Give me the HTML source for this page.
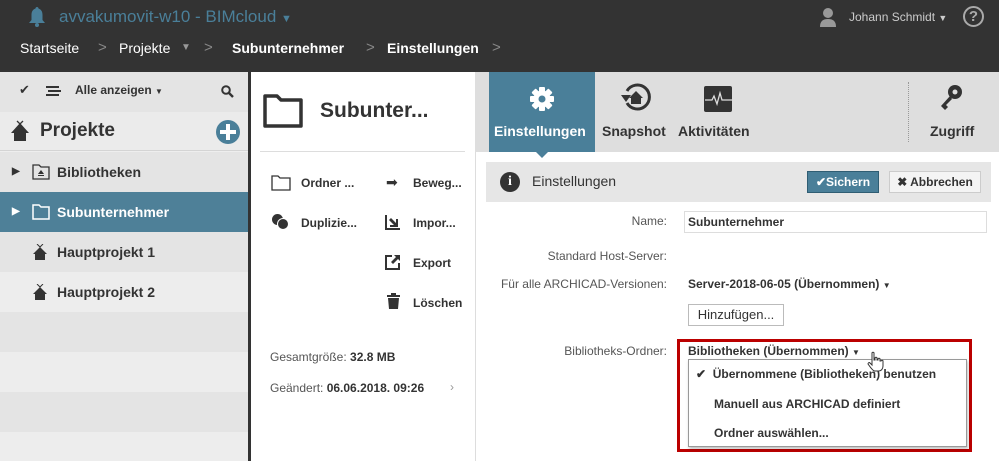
<!DOCTYPE html>
<html><head><meta charset="utf-8"><style>
*{margin:0;padding:0;box-sizing:border-box}
body{width:999px;height:461px;overflow:hidden;font-family:"Liberation Sans",sans-serif;background:#fff;position:relative;color:#333}
.abs{position:absolute}
.b{font-weight:bold}
#hdr{left:0;top:0;width:999px;height:72px;background:#333}
.row{position:absolute;left:0;width:248px;height:40px;font-size:14px;font-weight:bold;line-height:40px}
.lbl{position:absolute;font-size:12px;color:#555;text-align:right;width:180px;left:487px}
.bc{position:absolute;top:40px;font-size:14px;color:#fff;white-space:nowrap}
.ch{position:absolute;top:39px;font-size:15px;color:#888}
</style></head><body>
<div id="hdr" class="abs"></div>
<svg class="abs" style="left:27px;top:6px" width="20" height="22" viewBox="0 0 20 22"><path d="M10 1c-1 0-1.5.8-1.5 1.5C5.5 3.5 4.5 6 4.5 9v5L2 17h16l-2.5-3V9c0-3-1-5.5-4-6.5C11.5 1.8 11 1 10 1z" fill="#4a7f99"/><circle cx="10" cy="19" r="2" fill="#4a7f99"/></svg>
<div class="abs" style="left:59px;top:7px;font-size:17px;color:#4a7f99">avvakumovit-w10 - BIMcloud <span style="font-size:11px">▼</span></div>
<div class="bc" style="left:20px">Startseite</div>
<div class="ch" style="left:98px">&gt;</div>
<div class="bc" style="left:119px">Projekte</div>
<div class="bc" style="left:181px;top:42px;font-size:10px;color:#999">▼</div>
<div class="ch" style="left:204px">&gt;</div>
<div class="bc b" style="left:232px">Subunternehmer</div>
<div class="ch" style="left:366px">&gt;</div>
<div class="bc b" style="left:387px">Einstellungen</div>
<div class="ch" style="left:492px">&gt;</div>
<svg class="abs" style="left:819px;top:7px" width="18" height="20" viewBox="0 0 18 20"><circle cx="9" cy="6" r="5" fill="#999"/><path d="M1 20c0-6 3-8 8-8s8 2 8 8z" fill="#999"/></svg>
<div class="abs" style="left:849px;top:10px;font-size:12px;color:#ccc">Johann Schmidt <span style="font-size:9px">▼</span></div>
<div class="abs" style="left:963px;top:6px;width:21px;height:21px;border:2px solid #aaa;border-radius:50%;color:#aaa;font-size:15px;text-align:center;line-height:18px;font-weight:bold">?</div>

<div class="abs" style="left:0;top:72px;width:248px;height:389px;background:#eeeeee"></div>
<div class="abs" style="left:248px;top:72px;width:3px;height:389px;background:#333"></div>
<div class="abs" style="left:0;top:72px;width:248px;height:40px;background:#e4e4e4"></div>
<div class="abs" style="left:19px;top:82px;font-size:13px">✔</div>
<div class="abs" style="left:46px;top:86px;width:13px;height:2px;background:#333;box-shadow:2px 4px 0 #333,0 8px 0 #333"></div>
<div class="abs" style="left:75px;top:83px;font-size:12px;font-weight:bold">Alle anzeigen <span style="font-size:8px">▼</span></div>
<svg class="abs" style="left:221px;top:85px" width="13" height="13" viewBox="0 0 13 13"><circle cx="5" cy="5" r="3.8" fill="none" stroke="#333" stroke-width="2"/><path d="M8 8l4 4" stroke="#333" stroke-width="2.4"/></svg>
<div class="abs" style="left:0;top:112px;width:248px;height:39px;background:#ebebeb;border-bottom:1px solid #d4d4d4"></div>
<svg class="abs" style="left:9px;top:120px" width="22" height="22" viewBox="0 0 22 22"><path d="M11 3L2 13h3v8h12v-8h3z" fill="#333"/><path d="M8 1l3 3 3-3" stroke="#333" stroke-width="1.3" fill="none"/></svg>
<div class="abs b" style="left:40px;top:120px;font-size:19px">Projekte</div>
<div class="abs" style="left:216px;top:120px;width:24px;height:24px;border-radius:50%;background:#4a7f99"></div>
<div class="abs" style="left:226px;top:124px;width:4px;height:16px;background:#fff"></div>
<div class="abs" style="left:220px;top:130px;width:16px;height:4px;background:#fff"></div>

<div class="row" style="top:152px;background:#e4e4e4"><span class="abs" style="left:12px;font-size:10px">▶</span><svg class="abs" style="left:32px;top:12px" width="18" height="16" viewBox="0 0 18 16"><path d="M1 1h6l2 2h8v12H1z" fill="none" stroke="#333" stroke-width="1.3"/><path d="M6 11h6v1H6zM9 6l3 4H6z" fill="#333"/></svg><span class="abs" style="left:57px">Bibliotheken</span></div>
<div class="row" style="top:192px;background:#4e8098;color:#fff"><span class="abs" style="left:12px;font-size:10px">▶</span><svg class="abs" style="left:32px;top:12px" width="18" height="16" viewBox="0 0 18 16"><path d="M1 1h6l2 2h8v12H1z" fill="none" stroke="#fff" stroke-width="1.5"/></svg><span class="abs" style="left:57px">Subunternehmer</span></div>
<div class="row" style="top:232px;background:#e4e4e4"><svg class="abs" style="left:32px;top:12px" width="16" height="17" viewBox="0 0 16 17"><path d="M8 3L1 10h2v6h10v-6h2z" fill="#333"/><path d="M5 0l3 3 3-3" stroke="#333" fill="none"/></svg><span class="abs" style="left:57px">Hauptprojekt 1</span></div>
<div class="row" style="top:272px;background:#ededed"><svg class="abs" style="left:32px;top:12px" width="16" height="17" viewBox="0 0 16 17"><path d="M8 3L1 10h2v6h10v-6h2z" fill="#333"/><path d="M5 0l3 3 3-3" stroke="#333" fill="none"/></svg><span class="abs" style="left:57px">Hauptprojekt 2</span></div>
<div class="row" style="top:312px;background:#e4e4e4"></div>
<div class="row" style="top:352px;background:#ededed"></div>
<div class="row" style="top:392px;background:#e4e4e4"></div>
<div class="row" style="top:432px;background:#ededed;height:29px"></div>

<svg class="abs" style="left:262px;top:93px" width="42" height="36" viewBox="0 0 42 36"><path d="M3 3h12l4 4h20v26H3z" fill="none" stroke="#333" stroke-width="3.5" stroke-linejoin="round"/></svg>
<div class="abs b" style="left:320px;top:99px;font-size:21px">Subunter...</div>
<div class="abs" style="left:260px;top:151px;width:205px;height:1px;background:#ddd"></div>
<div class="abs" style="left:475px;top:152px;width:1px;height:309px;background:#ddd"></div>
<svg class="abs" style="left:271px;top:175px" width="20" height="16" viewBox="0 0 20 16"><path d="M1 1h6l2 2h10v12H1z" fill="none" stroke="#333" stroke-width="1.3"/></svg>
<div class="abs b" style="left:301px;top:176px;font-size:12px">Ordner ...</div>
<div class="abs" style="left:272px;top:214px;width:11px;height:11px;border-radius:50%;background:#333"></div>
<div class="abs" style="left:277px;top:218px;width:12px;height:12px;border-radius:50%;background:#333;border:1px solid #fff"></div>
<div class="abs b" style="left:301px;top:216px;font-size:12px">Duplizie...</div>
<div class="abs" style="left:386px;top:174px;font-size:14px">➡</div>
<div class="abs b" style="left:413px;top:176px;font-size:12px">Beweg...</div>
<svg class="abs" style="left:385px;top:214px" width="16" height="16" viewBox="0 0 16 16"><path d="M1 1v14h14" fill="none" stroke="#333" stroke-width="2"/><path d="M5 5h8v2H9l5 5-2 2-5-5v4H5z" fill="#333" transform="rotate(180 9 9)"/></svg>
<div class="abs b" style="left:413px;top:216px;font-size:12px">Impor...</div>
<svg class="abs" style="left:385px;top:254px" width="16" height="16" viewBox="0 0 16 16"><path d="M7 2H1v13h13V9" fill="none" stroke="#333" stroke-width="2"/><path d="M9 1h6v6l-2-2-5 5-2-2 5-5z" fill="#333"/></svg>
<div class="abs b" style="left:413px;top:256px;font-size:12px">Export</div>
<svg class="abs" style="left:387px;top:293px" width="13" height="16" viewBox="0 0 13 16"><path d="M0 2h13v2H0zM4 0h5v2H4zM1 5h11l-1 11H2z" fill="#333"/></svg>
<div class="abs b" style="left:413px;top:296px;font-size:12px">Löschen</div>
<div class="abs" style="left:270px;top:350px;font-size:12px;color:#555">Gesamtgröße: <b style="color:#333">32.8 MB</b></div>
<div class="abs" style="left:270px;top:381px;font-size:12px;color:#555">Geändert: <b style="color:#333">06.06.2018. 09:26</b></div>
<div class="abs" style="left:450px;top:380px;font-size:12px;color:#999">›</div>

<div class="abs" style="left:475px;top:72px;width:524px;height:80px;background:#dedede"></div>
<div class="abs" style="left:489px;top:72px;width:106px;height:80px;background:#4a7f99"></div>
<div class="abs" style="left:535px;top:151px;border:7px solid transparent;border-top-color:#4a7f99;border-bottom:0"></div>
<svg class="abs" style="left:529px;top:86px" width="26" height="26" viewBox="0 0 26 26"><g fill="#fff" transform="translate(13 13)"><rect x="-3" y="-12" width="6" height="24" rx="1"/><rect x="-3" y="-12" width="6" height="24" rx="1" transform="rotate(45)"/><rect x="-3" y="-12" width="6" height="24" rx="1" transform="rotate(90)"/><rect x="-3" y="-12" width="6" height="24" rx="1" transform="rotate(135)"/><circle r="8.5"/></g><circle cx="13" cy="13" r="3.5" fill="#4a7f99"/></svg>
<div class="abs b" style="left:494px;top:123px;font-size:14px;color:#fff">Einstellungen</div>
<svg class="abs" style="left:619px;top:83px" width="34" height="30" viewBox="0 0 34 30"><path d="M8 20A12 12 0 1 0 8 8" fill="none" stroke="#333" stroke-width="3"/><path d="M2 12h10l-5 7z" fill="#333"/><path d="M17 8l-7 7h2v6h10v-6h2z" fill="#333"/></svg>
<div class="abs b" style="left:602px;top:123px;font-size:14px">Snapshot</div>
<svg class="abs" style="left:704px;top:86px" width="28" height="26" viewBox="0 0 28 26"><rect width="28" height="26" rx="2" fill="#333"/><path d="M1 14h7l2-4 3 8 3-11 2 7h10" stroke="#ddd" stroke-width="1.3" fill="none"/></svg>
<div class="abs b" style="left:678px;top:123px;font-size:14px">Aktivitäten</div>
<div class="abs" style="left:908px;top:82px;width:0;height:60px;border-left:1px dotted #999"></div>
<svg class="abs" style="left:938px;top:84px" width="26" height="30" viewBox="0 0 26 30"><circle cx="17" cy="8" r="7" fill="#333"/><circle cx="17" cy="8" r="2.5" fill="#dedede"/><path d="M12 12L3 22l4 4 3-3-2-2 6-6z" fill="#333"/></svg>
<div class="abs b" style="left:930px;top:123px;font-size:14px">Zugriff</div>

<div class="abs" style="left:486px;top:162px;width:505px;height:40px;background:#e6e6e6"></div>
<div class="abs" style="left:500px;top:172px;width:20px;height:20px;border-radius:50%;background:#333;color:#fff;font-weight:bold;font-size:14px;text-align:center;line-height:20px;font-family:'Liberation Serif',serif">i</div>
<div class="abs" style="left:532px;top:173px;font-size:14px">Einstellungen</div>
<div class="abs b" style="left:807px;top:171px;width:72px;height:22px;background:#4a7f99;border:1px solid #2f5d73;color:#fff;font-size:12px;line-height:20px;text-align:center">✔Sichern</div>
<div class="abs b" style="left:889px;top:171px;width:92px;height:22px;background:#f4f4f4;border:1px solid #ccc;font-size:12px;line-height:20px;text-align:center">✖ Abbrechen</div>

<div class="lbl" style="top:214px">Name:</div>
<div class="abs b" style="left:684px;top:211px;width:303px;height:22px;border:1px solid #ddd;font-size:12px;padding:3px 3px;line-height:14px">Subunternehmer</div>
<div class="lbl" style="top:249px">Standard Host-Server:</div>
<div class="lbl" style="top:277px">Für alle ARCHICAD-Versionen:</div>
<div class="abs b" style="left:688px;top:277px;font-size:12px">Server-2018-06-05 (Übernommen) <span style="font-size:8px">▼</span></div>
<div class="abs" style="left:688px;top:304px;width:96px;height:22px;border:1px solid #bbb;font-size:13px;line-height:20px;text-align:center">Hinzufügen...</div>
<div class="lbl" style="top:344px">Bibliotheks-Ordner:</div>
<div class="abs" style="left:677px;top:339px;width:295px;height:113px;border:3px solid #b00;"></div>
<div class="abs b" style="left:688px;top:344px;font-size:12px">Bibliotheken (Übernommen) <span style="font-size:8px">▼</span></div>
<div class="abs" style="left:688px;top:359px;width:279px;height:88px;border:1px solid #999;background:#fff;box-shadow:1px 2px 3px rgba(0,0,0,.25)"></div>
<div class="abs b" style="left:696px;top:367px;font-size:12px">✔ &nbsp;Übernommene (Bibliotheken) benutzen</div>
<div class="abs b" style="left:714px;top:397px;font-size:12px">Manuell aus ARCHICAD definiert</div>
<div class="abs b" style="left:714px;top:426px;font-size:12px">Ordner auswählen...</div>
<svg class="abs" style="left:867px;top:351px" width="18" height="22" viewBox="0 0 18 22"><path d="M5 2c0-1 2-1 2 0v7h1V7c0-1 2-1 2 0v2h1V8c0-1 2-1 2 0v2h1c0-1 2-1 2 0v5c0 3-2 5-4 5H8c-2 0-3-2-4-3l-3-4c0-1 1-2 2-1l2 2z" fill="#fff" stroke="#333"/></svg>
</body></html>
